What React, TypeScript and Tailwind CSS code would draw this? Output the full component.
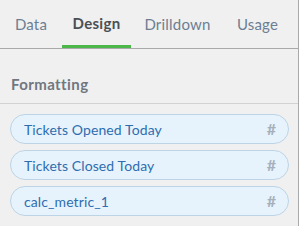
import React from 'react';

const TABS = [
  { label: 'Data', width: 'w-[62px]', active: false },
  { label: 'Design', width: 'w-[69px]', active: true },
  { label: 'Drilldown', width: 'w-[93px]', active: false },
  { label: 'Usage', width: 'w-[67px]', active: false },
];

const FIELDS = ['Tickets Opened Today', 'Tickets Closed Today', 'calc_metric_1'];

export default function App() {
  return (
    <div
      className="w-[299px] h-[226px] bg-[#f0f0f0] border-r border-[#a9a9a9] overflow-hidden"
      style={{ fontFamily: 'Lato, "Open Sans", sans-serif' }}
    >
      {/* Tabs */}
      <div className="flex h-[49px] border-b border-[#a9a9a9]">
        {TABS.map((tab) => (
          <div
            key={tab.label}
            className={
              tab.active
                ? `${tab.width} relative flex justify-center pt-[12px] text-[15px] font-bold tracking-[0.3px] text-[#4b4f55]`
                : `${tab.width} relative flex justify-center pt-[13px] text-[15px] tracking-[0.2px] text-[#6c7e93]`
            }
          >
            {tab.label}
            {tab.active && (
              <div className="absolute left-0 right-0 bottom-0 h-[3px] bg-[#4cb84a]" />
            )}
          </div>
        ))}
      </div>

      {/* Formatting header */}
      <div className="h-[55px] border-b border-[#d2d2d2] pl-[11px] pt-[24px] text-[15px] font-bold tracking-[0.4px] text-[#717780]">
        Formatting
      </div>

      {/* Field pills */}
      <div className="flex flex-col gap-[6px] pt-[10px] pl-[10px]">
        {FIELDS.map((f) => (
          <div
            key={f}
            className="w-[279px] h-[30px] rounded-full border border-[#bcd4e6] bg-[#e6f3fc] flex items-center justify-between pl-[13px] pr-[12px]"
          >
            <span className="text-[14px] tracking-[0.1px] text-[#2f6db0]">{f}</span>
            <span className="text-[16px] font-bold text-[#a6b0bd]">#</span>
          </div>
        ))}
      </div>
    </div>
  );
}
